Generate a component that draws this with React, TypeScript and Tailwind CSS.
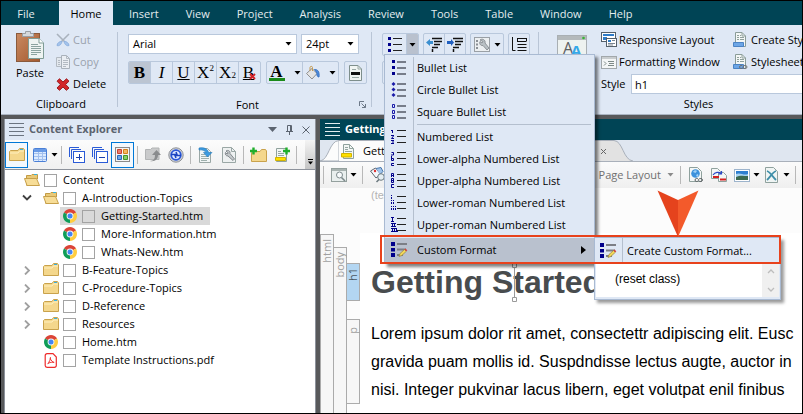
import type { ReactNode } from "react";

/* ---------- shared bits ---------- */

const Caret = ({ color = "#000" }: { color?: string }) => (
  <svg width="7" height="4" viewBox="0 0 7 4" className="shrink-0" aria-hidden="true">
    <path d="M0.500 0h6L3.500 3.500z" fill={color} />
  </svg>
);

const Svg = ({ w = 16, h = 16, children }: { w?: number; h?: number; children: ReactNode }) => (
  <svg width={w} height={h} viewBox={`0 0 ${w} ${h}`} fill="none" className="shrink-0" aria-hidden="true">
    {children}
  </svg>
);

/* ---------- ribbon icons ---------- */

const PasteIcon = () => (
  <Svg w={28} h={32}>
    <defs>
      <linearGradient id="board" x1="0" y1="0" x2="1" y2="1">
        <stop offset="0" stopColor="#c98a62" />
        <stop offset="1" stopColor="#a4592f" />
      </linearGradient>
    </defs>
    <rect x="0.5" y="2.5" width="23" height="28" fill="url(#board)" stroke="#8a5a3c" />
    <path d="M6.500 5.500V2.500H9.500V0.500H14.500V2.500H17.500V5.500Z" fill="#d5d9dd" stroke="#9aa0a6" />
    <path d="M12.500 7.500H23L27.500 12V27.500H12.500Z" fill="#eef4f2" stroke="#7f9c96" />
    <path d="M23 7.500V12H27.500" stroke="#7f9c96" fill="#fff" />
    <path d="M15 13.500h7M15 15.500h10M15 17.500h10M15 19.500h10M15 21.500h10M15 23.500h6" stroke="#8ba39f" />
  </Svg>
);

const CutIcon = () => (
  <Svg w={14} h={14}>
    <path d="M1 1l8 8M13 1L5 9" stroke="#a9b2bd" strokeWidth="1.6" />
    <path d="M1 12.500C1 10 4 8 6 8.500 5.500 11 3.500 13.500 1 12.500zM13 12.500C13 10 10 8 8 8.500 8.500 11 10.500 13.500 13 12.500z" fill="#a5c4ec" stroke="#8fb2e0" />
  </Svg>
);

const CopyIcon = () => (
  <Svg w={14} h={16}>
    <path d="M0.500 3.500h5v9h-5z" fill="#e3e8ee" stroke="#b3bac2" />
    <path d="M5.500 1.500h5l3 3v10h-8z" fill="#eaeef3" stroke="#a9b1ba" />
    <path d="M10.500 1.500v3h3M7 6.500h5M7 8.500h5M7 10.500h5M7 12.500h3M2 6.500h2M2 8.500h2M2 10.500h2" stroke="#b3bac2" />
  </Svg>
);

const DeleteIcon = () => (
  <Svg w={14} h={13}>
    <path d="M3.500 0.800L7 4l3.500-3.200L13 3.200 9.600 6.400 13 10l-2.600 2.300L7 9l-3.500 3.300L1 10l3.300-3.500L1 3.200z" fill="#d3252a" stroke="#9c1c20" />
  </Svg>
);

const BucketIcon = () => (
  <Svg w={16} h={16}>
    <path d="M1.500 8.500l5.500-5 5 5-5 5.500z" fill="#e4e4e4" stroke="#8f8f8f" />
    <path d="M5 6V2.500C5 1 7.500 1 7.500 2.500V6" stroke="#c39a52" />
    <path d="M9.500 4.500c3.500 0 5 2 4.500 7.500-1.500 0-2.500-1.500-2-4z" fill="#4f8fe0" stroke="#3a72bf" />
  </Svg>
);

const StylePageIcon = () => (
  <Svg w={13} h={16}>
    <path d="M0.500 0.500H9L12.500 4v11.500H0.500z" fill="#f1f5f3" stroke="#7e8f8c" />
    <path d="M9 0.500V4h3.500M3 4.500h4" stroke="#9aaaa6" />
    <path d="M2 7h9v3H2z" fill="#111" />
    <path d="M3 12.500h7" stroke="#9aaaa6" />
  </Svg>
);

type Mark = "square" | "diamond" | "open" | "decimal" | "lower" | "upper" | "iroman" | "uroman";

const marks: Record<Mark, ReactNode> = {
  square: <path d="M1 0h3v3H1zM1 6h3v3H1zM1 12h3v3H1z" fill="#00008b" />,
  diamond: <path d="M2.500 0L4.500 2 2.500 4 0.500 2zM2.500 5.500l2 2-2 2-2-2zM2.500 11l2 2-2 2-2-2z" fill="#1a1aa8" />,
  open: <path d="M1.500 0.500h2v3h-2zM1.500 6.500h2v3h-2zM1.500 11.500h2v3h-2z" stroke="#1a1aa8" />,
  decimal: <path d="M0 1.500h2M1.500 1v3M0 6.500h3M2.500 7L0.500 9.500H3M0 11.500h3M1 13h2M0 14.500h3" stroke="#00008b" />,
  lower: <path d="M0.500 1.500h2v2.500h-2.500M0.500 5v4.500h2v-2h-2M3 12.500H0.500v2H3" stroke="#00008b" />,
  upper: <path d="M0.500 4V0.500h2V4M0.500 2.500h2M0.500 5.500v4h2v-4h-2M0.500 7.500h2M3 11.500H0.500v3H3" stroke="#00008b" />,
  iroman: <path d="M0.500 0v1M0.500 2v2M0.500 5v1M2.500 5v1M0.500 7v2M2.500 7v2M0.500 11v1M2.500 11v1M4.500 11v1M0.500 13v2M2.500 13v2M4.500 13v2" stroke="#00008b" />,
  uroman: <path d="M0 0.500h3M1.500 0v4M0 4.500h3M0 6.500h5M1.500 6v3M3.500 6v3M0 9.500h5M0 11.500h6M1.500 11v4M3.500 11v4M5.500 11v4M0 14.500h7" stroke="#00008b" />,
};

const ListIcon = ({ mark, gray = false }: { mark: Mark; gray?: boolean }) => (
  <Svg w={16} h={16}>
    {marks[mark]}
    {gray ? (
      <path d="M6 1h9v2H6zM6 7h9v2H6zM6 13h9v2H6z" fill="#777d8a" />
    ) : (
      <path d="M6 1.500h9M6 7.500h9M6 13.500h9" stroke="#222" />
    )}
  </Svg>
);

const CustomListIcon = () => (
  <Svg w={17} h={16}>
    <path d="M0 0h4v4H0zM0 6h4v3.500H0zM0 11h4v4H0z" fill="#00008b" />
    <path d="M6 1h10v2H6zM6 6.500h9v2H6zM6 12h6v2H6z" fill="#7c7f86" />
    <path d="M8 14.500l1-3 4.500-4 1.800 1.800-4.500 4.200z" fill="#f3d85a" stroke="#97833a" strokeWidth="0.700" />
    <path d="M13.500 7.500l1-1 1.800 1.800-1 1z" fill="#d63b3b" />
  </Svg>
);

const IndentIcon = ({ out = false }: { out?: boolean }) => (
  <Svg w={16} h={15}>
    <path d="M6 1.500h10M8 4.500h8M8 7.500h6M6 10.500h6M6.500 12v3" stroke="#111" strokeWidth="1.500" />
    {out ? <path d="M0 5.500L4 2v2h3v3H4v2z" fill="#3b8fd0" /> : <path d="M7 5.500L4 2v2H0v3h4v2z" fill="#1f5fc0" />}
  </Svg>
);

const ListWrenchIcon = () => (
  <Svg w={16} h={15}>
    <rect x="0.500" y="0.500" width="15" height="14" fill="#eceff1" stroke="#9aa0a6" />
    <path d="M2 3h2v2H2zM2 6.500h2v2H2zM2 10h2v2H2z" fill="#8b9096" />
    <path d="M6 3c2-2 6 0 5 3l4 5-2 2-4-4.500C6.500 9 5 6.500 6 4.500l2 1.500 1-1.500z" fill="#b9c0c4" stroke="#7d8388" strokeWidth="0.800" />
  </Svg>
);

const LineSpacingIcon = () => (
  <Svg w={15} h={15}>
    <path d="M0.500 0v13.500h3M5.500 1.500h9M5.500 4.500h9M5.500 7.500h9M5.500 10.500h9M5.500 13.500h9M5.500 1v4M14.500 1v3" stroke="#111" />
  </Svg>
);

const StyleWindowIcon = () => (
  <svg width="30" height="30" viewBox="0 0 30 30" className="shrink-0" aria-hidden="true">
    <rect x="0.500" y="0.500" width="29" height="29" fill="#eef2f0" stroke="#a9afb3" />
    <path d="M1 1h28v4H1z" fill="#b4b9bb" />
    <circle cx="26.500" cy="3" r="1.300" fill="#36b336" />
    <text x="6" y="19" fontSize="16" fontFamily="Open Sans, sans-serif" fill="#5d6164">A</text>
    <text x="14" y="21" fontSize="15" fontWeight="700" fontFamily="Open Sans, sans-serif" fill="#35a8e8">A</text>
  </svg>
);

const ResponsiveIcon = () => (
  <Svg w={16} h={16}>
    <rect x="0.500" y="0.500" width="14" height="9" fill="#fff" stroke="#55606a" />
    <path d="M2 2h11v2H2zM2 5h4v3H2z" fill="#2f7cc8" />
    <rect x="5.500" y="6.500" width="10" height="8" fill="#fff" stroke="#55606a" />
    <path d="M7 8h3v2H7z" fill="#2f7cc8" />
    <path d="M11 8.500h3M7 11.500h7M7 13h5" stroke="#7a8590" />
  </Svg>
);

const FormattingIcon = () => (
  <Svg w={16} h={13}>
    <rect x="0.500" y="0.500" width="15" height="12" fill="#f4f6f6" stroke="#a2a8ab" />
    <path d="M1 1h14v2H1z" fill="#c9cdcf" />
    <path d="M7 5.500h6M8 7.500h5M7 9.500h6M3 5.500l2 2-2 2" stroke="#7e8a88" />
  </Svg>
);

const SheetIcon = ({ link = false }: { link?: boolean }) => (
  <Svg w={15} h={16}>
    <path d="M2.500 0.500H9L12.500 4v10.500H2.500z" fill="#f4f7f6" stroke="#8a9c98" />
    <path d="M9 0.500V4h3.500M4 3.500h2M7 3.500h1M4 5.500h2M7 5.500h4M4 7.500h2M7 7.500h4" stroke="#8fa09c" />
    <path d="M0.500 10.500h10v4H0.500z" fill="#6da6e6" stroke="#4b83c4" />
    {link && <path d="M6.500 13c0-2 3-2 3.500-0.500M10 12.500c1-1.500 4-1.500 4 0.500s-3 2-4 0.500M10 13.500c-1 1.500-3.500 1.300-3.500-0.500" stroke="#6e7073" />}
  </Svg>
);

/* ---------- explorer icons ---------- */

const FolderIcon = ({ open = false }: { open?: boolean }) => (
  <Svg w={16} h={14}>
    {open ? (
      <>
        <path d="M2.500 12.500V2.500H7L8 1.500H13.500V6" fill="#e9c977" stroke="#c29b45" />
        <path d="M10 1.500h3" stroke="#38b0e0" />
        <path d="M0.500 5.500H12.500L15.500 12.500H3z" fill="#f7dd97" stroke="#c7a04b" />
      </>
    ) : (
      <>
        <path d="M0.500 12.500V3.500L1.500 2.500H9L10.500 0.500H14.500L15.500 2V12.500z" fill="#f4d78c" stroke="#c9a24c" />
        <path d="M1 5h8l1.500-2H15" stroke="#fff0c0" />
        <path d="M11 1.500h3" stroke="#38b0e0" />
      </>
    )}
  </Svg>
);

const ChromeIcon = () => (
  <svg width="14" height="14" viewBox="0 0 14 14" className="mx-px shrink-0" aria-hidden="true">
    <path d="M7 7L0.940 3.500A7 7 0 0 1 13.060 3.500z" fill="#db4437" />
    <path d="M7 7L13.060 3.500A7 7 0 0 1 7 14z" fill="#ffcd40" />
    <path d="M7 7V14A7 7 0 0 1 0.940 3.500z" fill="#0f9d58" />
    <circle cx="7" cy="7" r="3.400" fill="#f4f4f4" />
    <circle cx="7" cy="7" r="2.500" fill="#4285f4" />
  </svg>
);

const PdfIcon = () => (
  <svg width="14" height="15" viewBox="0 0 14 15" fill="none" className="mx-px shrink-0" aria-hidden="true">
    <path d="M3 0.700h6l3.300 3.300v8.500a1.800 1.800 0 0 1-1.800 1.800H3a1.800 1.800 0 0 1-1.800-1.800v-10A1.800 1.800 0 0 1 3 0.700z" fill="#fff" stroke="#ee2b2b" strokeWidth="1.200" />
    <path d="M6.500 4.500c-1 0 0.500 4 3.500 5 1 0-4-1-6 1.200C3 11.500 6.500 8 6.500 4.500z" stroke="#ee2b2b" />
  </svg>
);

const GridIcon = () => (
  <Svg w={14} h={14}>
    <rect x="0.500" y="0.500" width="13" height="13" rx="1" fill="#dcebff" stroke="#4a7fd6" />
    <path d="M1 1h12v3H1z" fill="#6a9be6" />
    <path d="M1 5.500h12M1 8.500h12M1 11.500h12M5.500 4v9M9.500 4v9" stroke="#a3c0ee" />
  </Svg>
);

const StackIcon = ({ plus = false }: { plus?: boolean }) => (
  <Svg w={16} h={16}>
    <path d="M0.500 10V0.500H10M2.500 12V2.500H12" stroke="#2a5bd7" />
    <rect x="4.500" y="4.500" width="11" height="11" fill="#fff" stroke="#2a5bd7" />
    <path d={plus ? "M7 10.500h6M10.500 7v6" : "M7 10.500h6"} stroke="#1a3fae" />
  </Svg>
);

const QuadIcon = () => (
  <Svg w={15} h={15}>
    <rect x="0.500" y="0.500" width="14" height="14" fill="#f4f4f4" stroke="#8a8a8a" />
    <path d="M2.500 2.500h4v4h-4z" fill="#e87a6a" stroke="#c8402f" />
    <path d="M8.500 2.500h4v4h-4z" fill="#f4b860" stroke="#d3811c" />
    <path d="M2.500 8.500h4v4h-4z" fill="#6ea6ea" stroke="#2b66b8" />
    <path d="M8.500 8.500h4v4h-4z" fill="#86cc68" stroke="#449428" />
  </Svg>
);

const FolderUpIcon = () => (
  <Svg w={16} h={15}>
    <path d="M0.500 12.500v-10h5l1.500-1.500h7v11.500z" fill="#c9cacb" stroke="#b2b4b5" />
    <path d="M5 14c4 0 5-3 5-6H7l4.500-5L16 8h-3c0 4-3 7-8 6z" fill="#8a8c8e" />
  </Svg>
);

const SyncIcon = () => (
  <Svg w={16} h={16}>
    <circle cx="8" cy="8" r="7.200" fill="#d0d3d8" stroke="#8d9096" />
    <circle cx="8" cy="8" r="4.800" fill="#dfe9ff" stroke="#2a57d8" strokeWidth="1.800" />
    <path d="M3 7.500h6l-1-2.500M13 8.500H7l1 2.500" stroke="#1b44c0" strokeWidth="1.500" />
  </Svg>
);

const PageArrowIcon = () => (
  <Svg w={15} h={16}>
    <path d="M1.500 1.500h8l3 3v11h-11z" fill="#f2f6f6" stroke="#9aa7a5" />
    <path d="M3 7.500h4M3 9.500h8M3 11.500h8M3 13.500h6" stroke="#9fb0ad" />
    <path d="M1 1c5-1 9 1 9.500 4.500H14L9.500 10 5.500 5.500H8C7 3.500 4 2.500 1 3z" fill="#3c9be0" stroke="#2477b8" strokeWidth="0.600" />
  </Svg>
);

const PageWrenchIcon = () => (
  <Svg w={14} h={16}>
    <path d="M0.500 0.500h9l4 4v11h-13z" fill="#eef1f1" stroke="#9aa7a5" />
    <path d="M9.500 0.500v4h4" stroke="#9aa7a5" />
    <path d="M4 4c2-1.500 4.500 0 4 2.500l4.500 5.500-1.500 1.500L6 9C3.500 9 3 7 3.500 5.500L5 7l1.300-1z" fill="#c5cacc" stroke="#6d7478" strokeWidth="0.800" />
  </Svg>
);

const FolderPlusIcon = () => (
  <Svg w={17} h={16}>
    <path d="M1.500 14.500v-9l1-1H10L11.500 2.500h4l1 1.500v10.500z" fill="#f4d78c" stroke="#c9a24c" />
    <path d="M0 4h7M3.500 0.500v7" stroke="#1fae2b" strokeWidth="2.400" />
  </Svg>
);

const PagePlusIcon = () => (
  <Svg w={16} h={16}>
    <path d="M2.500 1.500h10v13h-10z" fill="#f2f6f4" stroke="#8fa19d" />
    <path d="M4 4.500h3M4 6.500h6M4 8.500h6" stroke="#95a6a2" />
    <path d="M1.500 10.500h10v3h-10z" fill="#ffe000" stroke="#d3b400" />
    <path d="M9 4h7M12.500 0.500v7" stroke="#1fae2b" strokeWidth="2.400" />
  </Svg>
);

const TopicIcon = () => (
  <Svg w={14} h={15}>
    <path d="M2.500 0.500h6l4 4v10h-10z" fill="#f3f7f5" stroke="#8fa19d" />
    <path d="M8.500 0.500v4h4M4 3.500h3M4 5.500h3M4 7.500h7" stroke="#95a6a2" />
    <path d="M0.500 9.500h10v3.500h-10z" fill="#ffe000" stroke="#d3b400" />
  </Svg>
);

const PreviewIcon = () => (
  <Svg w={16} h={14}>
    <rect x="0.500" y="0.500" width="15" height="13" fill="#e9efee" stroke="#94a09e" />
    <path d="M1 1h14v2H1z" fill="#a8b3b1" />
    <circle cx="8.500" cy="7" r="3" fill="#f8fbfc" stroke="#7d8a8c" />
    <path d="M10.500 9.500l3.500 3.500" stroke="#7d8a8c" strokeWidth="1.600" />
  </Svg>
);

const TagSearchIcon = () => (
  <Svg w={16} h={16}>
    <path d="M0.500 4l5-3 5 6-4.500 4z" fill="#f5f7fa" stroke="#5b6670" />
    <path d="M6 1.500l5-1 2 4-3 3" fill="#9fc3ea" stroke="#4a78ad" />
    <circle cx="5" cy="4" r="1.200" fill="#d33" />
    <circle cx="11" cy="10" r="3.300" fill="#e5eef3" stroke="#6d7a80" />
    <path d="M9 12.500L6.500 15" stroke="#6d7a80" strokeWidth="1.600" />
  </Svg>
);

const GlobePageIcon = () => (
  <Svg w={14} h={16}>
    <path d="M0.500 0.500h8l4 4v10H0.500z" fill="#f4f7f6" stroke="#8fa19d" />
    <circle cx="6.500" cy="6.500" r="4.300" fill="#3d92dc" />
    <path d="M4 5c1-2 3-2.500 4-1L6.500 6zM7 8l2-1 0.500 2-1.500 1z" fill="#9fd0f5" />
    <path d="M6 13c0-2 3-2 3.500-0.500M9.500 12.500c1-1.500 4-1.300 4 0.500s-3 2-4 0.500M9.500 13.500c-1 1.500-3.500 1.300-3.500-0.500" stroke="#5e6265" />
  </Svg>
);

const XrefIcon = () => (
  <Svg w={16} h={16}>
    <path d="M0.500 1.500h6l3 3v7h-9z" fill="#f4f7f6" stroke="#8fa19d" />
    <path d="M7.500 5.500h5l3 3v6h-8z" fill="#f4f7f6" stroke="#8fa19d" />
    <path d="M2 8c2-3 6-3.500 8-1.500M10.500 4v3h-3" stroke="#2a49c8" strokeWidth="1.200" />
    <path d="M2 10h6M9 12.500h6" stroke="#d42020" strokeWidth="2" />
  </Svg>
);

const ImageIcon = () => (
  <Svg w={16} h={13}>
    <rect x="0.500" y="0.500" width="15" height="12" fill="#fff" stroke="#9db4cc" />
    <path d="M2 2h12v5H2z" fill="#2e7fd0" />
    <path d="M2 5c4-2 8 2 12 0v3H2z" fill="#a9d4f2" />
    <path d="M2 8c4-2 8-1 12-1v4H2z" fill="#3c6a50" />
  </Svg>
);

const CrossPageIcon = () => (
  <Svg w={13} h={16}>
    <path d="M0.500 0.500h8l4 4v11H0.500z" fill="#f0f5f4" stroke="#8fa19d" />
    <path d="M2 4c3 1 6 6 9 9M11 4C8 5 5 10 2 13" stroke="#3e8ea8" strokeWidth="1.800" />
  </Svg>
);

const Hamburger = ({ color }: { color: string }) => (
  <Svg w={15} h={13}>
    <path d="M0 0.500h15M0 4.500h15M0 8.500h15M0 12.500h15" stroke={color} />
  </Svg>
);

/* ---------- ribbon ---------- */

const RibbonSep = () => <div className="mb-[7px] mt-[7px] w-px shrink-0 bg-[#b9c5d6]" />;
const cell = "flex shrink-0 items-center justify-center border-r border-[#b9c8dc] last:border-r-0";
const cellGroup = "flex h-[23px] shrink-0 overflow-hidden rounded-[2px] border border-[#b9c8dc]";

const listItems: { mark: Mark; label: string; gray?: boolean }[] = [
  { mark: "square", label: "Bullet List", gray: true },
  { mark: "diamond", label: "Circle Bullet List", gray: true },
  { mark: "open", label: "Square Bullet List", gray: true },
  { mark: "decimal", label: "Numbered List" },
  { mark: "lower", label: "Lower-alpha Numbered List" },
  { mark: "upper", label: "Upper-alpha Numbered List" },
  { mark: "iroman", label: "Lower-roman Numbered List" },
  { mark: "uroman", label: "Upper-roman Numbered List" },
];

function CustomFormatMenu() {
  return (
    <div className="absolute -top-px left-[209px] z-20 w-[187px] border border-[#a9bad2] bg-[#dfe8f5] pb-[2px] shadow-[3px_3px_3px_rgba(0,0,0,0.4)]">
      <button type="button" className="flex h-[26px] w-full items-center">
        <span className="flex w-7 shrink-0 items-center justify-center self-stretch border-r border-[#b4bfce]">
          <CustomListIcon />
        </span>
        <span className="whitespace-nowrap pl-1">Create Custom Format...</span>
      </button>
      <div className="mx-px flex h-[33px] bg-white">
        <button type="button" className="flex flex-1 items-center pb-1 pl-[19px] font-['Liberation_Sans',sans-serif] text-[12px]">
          (reset class)
        </button>
        <div className="flex w-[17px] flex-col items-center justify-between bg-[#f0f0f0] py-[5px]">
          <Svg w={8} h={5}><path d="M1 4l3-3 3 3" stroke="#bdbdbd" strokeWidth="1.300" /></Svg>
          <Svg w={8} h={5}><path d="M1 1l3 3 3-3" stroke="#bdbdbd" strokeWidth="1.300" /></Svg>
        </div>
      </div>
    </div>
  );
}

function ListMenu() {
  return (
    <div className="absolute left-[2px] top-[21px] z-10 w-[211px] border border-[#a9bad2] bg-[#dfe8f5] pb-px pt-[2px] shadow-[3px_3px_3px_rgba(0,0,0,0.5)]">
      {listItems.map((it, i) => (
        <div key={it.label}>
          {i === 3 && (
            <div className="flex h-[3px] items-center pl-[28px]">
              <div className="h-[3px] w-px bg-[#b4bfce]" />
              <div className="ml-[3px] mr-[3px] h-px flex-1 bg-[#b4bfce]" />
            </div>
          )}
          <button type="button" className="flex h-[22px] w-full items-center">
            <span className="flex w-[29px] shrink-0 items-center justify-center self-stretch border-r border-[#b4bfce]">
              <ListIcon mark={it.mark} gray={it.gray} />
            </span>
            <span className="whitespace-nowrap pl-[3px]">{it.label}</span>
          </button>
        </div>
      ))}
      <div className="relative mt-[2px]">
        <button type="button" className="flex h-[24px] w-full items-center bg-[#b9c1ce]">
          <span className="flex w-[29px] shrink-0 justify-center">
            <CustomListIcon />
          </span>
          <span className="pl-[3px]">Custom Format</span>
          <svg width="5" height="8" viewBox="0 0 5 8" className="ml-auto mr-2" aria-hidden="true">
            <path d="M0 0l5 4-5 4z" fill="#000" />
          </svg>
        </button>
        <CustomFormatMenu />
        <div className="pointer-events-none absolute -left-[5px] -top-[3px] z-30 h-[29px] w-[401px] border-2 border-[#e8421c]" />
        <svg width="42" height="47" viewBox="0 0 42 47" className="absolute -top-[48px] left-[272px] z-30" aria-hidden="true">
          <path d="M0.500 0.500L21 10v37z" fill="#e5431d" />
          <path d="M41.500 0.500L21 10v37z" fill="#f35a2b" />
        </svg>
      </div>
    </div>
  );
}

function Ribbon() {
  const B = "font-['Liberation_Serif',serif] text-[17px] leading-none";
  return (
    <header className="shrink-0">
      <nav className="flex h-6 bg-[#004455] pt-[2px] text-[#e3ecef]">
        <button type="button" className="mr-2 w-[50px]">File</button>
        <button type="button" className="-mt-[2px] w-[54px] bg-[#dfe8f5] pt-[2px] text-black">Home</button>
        <div className="flex gap-[27px] pl-4">
          {["Insert", "View", "Project", "Analysis", "Review", "Tools", "Table", "Window", "Help"].map((t) => (
            <button type="button" key={t}>{t}</button>
          ))}
        </div>
      </nav>

      <div className="flex h-[90px] border-b border-[#aab4c2] bg-[#dfe8f5]">
        {/* Clipboard */}
        <section className="flex w-[116px] shrink-0 flex-col">
          <div className="flex flex-1 pl-[14px] pt-[4px]">
            <button type="button" className="flex w-[30px] flex-col items-center pt-[2px]">
              <PasteIcon />
              <span className="leading-[20px]">Paste</span>
            </button>
            <div className="flex flex-col pl-[11px]">
              <button type="button" className="flex h-[22px] items-center gap-[3px] text-[#9aa2ad]"><CutIcon />Cut</button>
              <button type="button" className="flex h-[22px] items-center gap-[3px] text-[#9aa2ad]"><CopyIcon />Copy</button>
              <button type="button" className="flex h-[22px] items-center gap-[3px]"><DeleteIcon />Delete</button>
            </div>
          </div>
          <div className="h-[19px] pl-1 text-center leading-[18px]">Clipboard</div>
        </section>
        <RibbonSep />

        {/* Font */}
        <section className="flex w-[253px] shrink-0 flex-col pl-[10px]">
          <div className="flex-1 pt-[9px]">
            <div className="flex gap-1">
              <button type="button" aria-label="Font family" className="flex h-5 w-[169px] items-center justify-between border border-[#b9c8dc] bg-white px-1">
                Arial<Caret />
              </button>
              <button type="button" aria-label="Font size" className="flex h-5 w-[58px] items-center justify-between border border-[#b9c8dc] bg-white px-1">
                24pt<Caret />
              </button>
            </div>
            <div className="mt-[7px] flex gap-[5px]">
              <div className={cellGroup}>
                <button type="button" className={`${cell} ${B} w-[22px] bg-[#bcc5d2] font-bold`}>B</button>
                <button type="button" className={`${cell} ${B} w-[22px] italic`}>I</button>
                <button type="button" className={`${cell} ${B} w-[22px] underline`}>U</button>
                <button type="button" className={`${cell} ${B} w-[22px]`}>X<sup className="text-[9px]">2</sup></button>
                <button type="button" className={`${cell} ${B} w-[22px]`}>X<sub className="text-[9px]">2</sub></button>
                <button type="button" aria-label="Clear formatting" className={`${cell} ${B} w-[21px] underline`}>
                  B
                  <svg width="7" height="7" viewBox="0 0 7 7" className="-ml-[5px] mb-[3px] self-end" aria-hidden="true">
                    <path d="M1 1l5 5M6 1L1 6" stroke="#d3252a" strokeWidth="2" />
                  </svg>
                </button>
              </div>
              <div className={cellGroup}>
                <button type="button" aria-label="Font colour" className={`${cell} w-[36px] gap-[9px]`}>
                  <span className="w-4 border-b-[3px] border-[#1a8a1a] text-center font-['Liberation_Serif',serif] text-[17px] font-bold leading-[13px]">A</span>
                  <Caret />
                </button>
                <button type="button" aria-label="Highlight" className={`${cell} w-[35px] gap-[8px]`}><BucketIcon /><Caret /></button>
              </div>
              <div className={cellGroup}>
                <button type="button" aria-label="Font properties" className={`${cell} w-[21px]`}><StylePageIcon /></button>
              </div>
            </div>
          </div>
          <div className="flex h-[19px] items-center">
            <span className="flex-1 pl-2 text-center leading-[18px]">Font</span>
            <button type="button" aria-label="Font dialog" className="mr-[5px]">
              <Svg w={7} h={7}><path d="M0.500 5V0.500H5M2.500 2.500l4 4M6.500 3v3.500H3" stroke="#6d7988" /></Svg>
            </button>
          </div>
        </section>
        <RibbonSep />

        {/* Paragraph */}
        <section className="w-[166px] shrink-0 pl-[10px] pt-[8px]">
          <div className="flex gap-[4px]">
            <div className="relative">
              <div className={cellGroup}>
                <button type="button" aria-label="Bullet list" className={`${cell} w-[24px]`}><ListIcon mark="square" /></button>
                <button type="button" aria-label="List types" className={`${cell} w-[11px] bg-[#b9c1ce]`}><Caret /></button>
              </div>
              <ListMenu />
            </div>
            <div className={cellGroup}>
              <button type="button" aria-label="Outdent" className={`${cell} w-[21px]`}><IndentIcon out /></button>
              <button type="button" aria-label="Indent" className={`${cell} w-[20px]`}><IndentIcon /></button>
            </div>
            <div className={cellGroup}>
              <button type="button" aria-label="List settings" className={`${cell} w-[32px] gap-[4px]`}><ListWrenchIcon /><Caret /></button>
            </div>
            <div className={cellGroup}>
              <button type="button" aria-label="Line spacing" className={`${cell} w-[20px]`}><LineSpacingIcon /></button>
            </div>
          </div>
          <div className="mt-[5px] h-[23px] w-[120px] rounded-[2px] border border-[#b9c8dc]" />
        </section>
        <RibbonSep />

        {/* Styles */}
        <section className="flex min-w-0 flex-1 flex-col">
          <div className="flex flex-1 pt-[4px]">
            <button type="button" aria-label="Styles window" className="ml-[18px] mr-[14px] mt-[6px] self-start"><StyleWindowIcon /></button>
            <div className="min-w-0 flex-1">
              <div className="flex h-[22px] whitespace-nowrap">
                <button type="button" className="flex w-[132px] shrink-0 items-center gap-[2px]"><ResponsiveIcon />Responsive Layout</button>
                <button type="button" className="flex items-center gap-[3px]"><SheetIcon />Create Style</button>
              </div>
              <div className="flex h-[22px] whitespace-nowrap">
                <button type="button" className="flex w-[132px] shrink-0 items-center gap-[2px]"><FormattingIcon />Formatting Window</button>
                <button type="button" className="flex items-center gap-[3px]"><SheetIcon link />Stylesheet</button>
              </div>
              <label className="flex h-[22px] items-center gap-1">
                <span className="w-[26px]">Style</span>
                <input defaultValue="h1" className="h-5 min-w-0 flex-1 border border-r-0 border-[#b9c8dc] bg-white pl-[3px] outline-none" />
              </label>
            </div>
          </div>
          <div className="h-[19px] pl-[56px] text-center leading-[18px]">Styles</div>
        </section>
      </div>
    </header>
  );
}

/* ---------- content explorer ---------- */

const ToolSep = () => <span className="mx-[3px] h-[18px] w-px shrink-0 bg-[#b8b8b8]" />;

const Tool = ({ label, active, children }: { label: string; active?: boolean; children: ReactNode }) => (
  <button
    type="button"
    aria-label={label}
    className={`flex h-[26px] w-[23px] shrink-0 items-center justify-center border ${active ? "border-[#0078d7] bg-[#f3f8fd]" : "border-transparent"}`}
  >
    {children}
  </button>
);

type Node = { level: 0 | 1 | 2; kind: "open" | "folder" | "htm" | "pdf"; name: string; twisty?: "open" | "closed"; selected?: boolean };

const tree: Node[] = [
  { level: 0, kind: "open", name: "Content" },
  { level: 1, kind: "open", name: "A-Introduction-Topics", twisty: "open" },
  { level: 2, kind: "htm", name: "Getting-Started.htm", selected: true },
  { level: 2, kind: "htm", name: "More-Information.htm" },
  { level: 2, kind: "htm", name: "Whats-New.htm" },
  { level: 1, kind: "folder", name: "B-Feature-Topics", twisty: "closed" },
  { level: 1, kind: "folder", name: "C-Procedure-Topics", twisty: "closed" },
  { level: 1, kind: "folder", name: "D-Reference", twisty: "closed" },
  { level: 1, kind: "folder", name: "Resources", twisty: "closed" },
  { level: 1, kind: "htm", name: "Home.htm" },
  { level: 1, kind: "pdf", name: "Template Instructions.pdf" },
];

const gutter = { 0: "w-px", 1: "w-5", 2: "w-[39px]" };

function TreeRow({ n }: { n: Node }) {
  return (
    <li className="flex h-[18px] items-center pl-4">
      <span className={`shrink-0 ${gutter[n.level]}`}>
        {n.twisty === "open" && <Svg w={12} h={8}><path d="M2 1.500l4 4 4-4" stroke="#404040" strokeWidth="1.800" /></Svg>}
        {n.twisty === "closed" && <Svg w={12} h={9}><path d="M4 0.500l4 4-4 4" stroke="#a0a0a0" strokeWidth="1.800" /></Svg>}
      </span>
      <label className={`flex h-[18px] items-center whitespace-nowrap px-[2px] ${n.selected ? "bg-[#d9d9d9] pr-[7px]" : ""}`}>
        {n.kind === "htm" ? <ChromeIcon /> : n.kind === "pdf" ? <PdfIcon /> : <FolderIcon open={n.kind === "open"} />}
        <input type="checkbox" className={`ml-1 mr-[6px] h-[13px] w-[13px] shrink-0 appearance-none border border-[#a3a3a3] ${n.selected ? "" : "bg-white"}`} />
        {n.name}
      </label>
    </li>
  );
}

function Explorer() {
  return (
    <aside className="mr-[4px] flex w-[312px] shrink-0 flex-col border-x border-[#8d929b] bg-white">
      <div className="flex h-[21px] shrink-0 items-center bg-[#dfe8f5] pl-1 font-bold text-[#5c6470]">
        <Hamburger color="#6b7480" />
        <h2 className="flex-1 pl-[5px]">Content Explorer</h2>
        <div className="flex items-center gap-[9px] pr-[5px]">
          <Svg w={9} h={5}><path d="M0 0h9L4.500 5z" fill="#5c6470" /></Svg>
          <Svg w={7} h={10}><path d="M1.500 6V0.500h4V6M0 6.500h7M3.500 7v3M4.500 1v5" stroke="#5c6470" /></Svg>
          <Svg w={8} h={8}><path d="M0.500 0.500l7 7M7.500 0.500l-7 7" stroke="#5c6470" /></Svg>
        </div>
      </div>
      <div className="flex h-[30px] shrink-0 items-center border-b border-[#8d929b] bg-gradient-to-b from-[#fcfcfc] to-[#f0f0f0]">
        <Tool label="Folders" active><FolderIcon /></Tool>
        <Tool label="List view"><GridIcon /></Tool>
        <button type="button" aria-label="View options"><Caret /></button>
        <ToolSep />
        <Tool label="Expand all"><StackIcon plus /></Tool>
        <Tool label="Collapse all"><StackIcon /></Tool>
        <Tool label="Show files" active><QuadIcon /></Tool>
        <ToolSep />
        <Tool label="Up one level"><FolderUpIcon /></Tool>
        <Tool label="Synchronize"><SyncIcon /></Tool>
        <ToolSep />
        <Tool label="Open"><PageArrowIcon /></Tool>
        <Tool label="Properties"><PageWrenchIcon /></Tool>
        <ToolSep />
        <Tool label="New folder"><FolderPlusIcon /></Tool>
        <Tool label="New topic"><PagePlusIcon /></Tool>
        <ToolSep />
        <button type="button" aria-label="More tools" className="ml-auto flex h-full w-[10px] flex-col items-center justify-end gap-px bg-gradient-to-b from-[#f4f4f4] to-[#c4c4c4] pb-1">
          <span className="h-px w-[5px] bg-black" />
          <Svg w={5} h={4}><path d="M0 0.500h5L2.500 3.500z" fill="#000" /></Svg>
        </button>
      </div>
      <ul className="pt-px">
        {tree.map((n) => <TreeRow key={n.name} n={n} />)}
      </ul>
    </aside>
  );
}

/* ---------- editor ---------- */

const bar = "border border-[#ababab] text-[11px] leading-[12px] text-[#a0a0a0]";
const barText = "[writing-mode:vertical-rl] rotate-180";

function Editor() {
  return (
    <main className="flex min-w-0 flex-1 flex-col bg-[#fcfcfc]">
      <div className="flex h-[21px] shrink-0 items-center bg-[#004455] pl-[5px] font-bold text-white">
        <Hamburger color="#e4edf0" />
        <span className="pl-[5px]">Getting-Started.htm</span>
      </div>
      <div className="flex h-[22px] shrink-0 items-end border-b border-[#a9b0ba] bg-[#dfe6f0]">
        <Svg w={19} h={21}>
          <path d="M0 21C9 20 9 1 19 0.500V21z" fill="#fcfcfc" stroke="#a9b0ba" />
        </Svg>
        <div className="flex h-[21px] w-[120px] items-center gap-[8px] border-t border-[#a9b0ba] bg-[#fcfcfc] pl-[2px]">
          <TopicIcon /><span className="whitespace-nowrap">Getting-Started</span>
        </div>
        <div className="flex h-[21px] w-[155px] items-center justify-end border-t border-[#a9b0ba] bg-[#e2e2e2] pr-[7px]">
          <button type="button" aria-label="Close tab">
            <Svg w={7} h={7}><path d="M1 1l5 5M6 1L1 6" stroke="#666" /></Svg>
          </button>
        </div>
        <Svg w={19} h={21}>
          <path d="M0 0.500C9 1 9 20 19 21H0z" fill="#e2e2e2" />
          <path d="M0 0.500C9 1 9 20 19 21" stroke="#a9b0ba" />
        </Svg>
      </div>
      <div className="flex h-[26px] shrink-0 items-center bg-gradient-to-b from-[#fbfbfb] to-[#efefef] text-[#707070]">
        <ToolSep />
        <Tool label="Preview"><PreviewIcon /></Tool>
        <Caret />
        <span className="w-[2px]" />
        <ToolSep />
        <Tool label="Find tags"><TagSearchIcon /></Tool>
        <div className="ml-auto flex items-center pr-[3px]">
          <button type="button" className="mr-[3px] flex items-center gap-[6px] whitespace-nowrap">Page Layout<Caret color="#8a8a8a" /></button>
          <ToolSep />
          <Tool label="Insert hyperlink"><GlobePageIcon /></Tool>
          <Tool label="Insert cross-reference"><XrefIcon /></Tool>
          <Tool label="Insert image"><ImageIcon /></Tool>
          <Caret />
          <Tool label="Insert snippet"><CrossPageIcon /></Tool>
          <Caret />
          <span className="w-[2px]" />
          <ToolSep />
        </div>
      </div>
      <div className="flex min-h-0 flex-1">
        <div className={`mt-[46px] w-[14px] shrink-0 border-b-0 bg-[#f7f7f7] pt-1 ${bar}`}><span className={barText}>html</span></div>
        <div className={`mt-[59px] w-[13px] shrink-0 border-b-0 border-l-0 bg-[#f7f7f7] pt-1 ${bar}`}><span className={barText}>body</span></div>
        <div className="flex w-[13px] shrink-0 flex-col pt-[75px]">
          <div className={`h-[38px] border-l-0 bg-[#b3d6f2] pt-1 ${bar}`}><span className={`${barText} text-[#4a5560]`}>h1</span></div>
          <div className={`mt-[18px] h-[85px] border-l-0 bg-[#f7f7f7] pt-1 ${bar}`}><span className={barText}>p</span></div>
        </div>
        <article className="min-w-0 flex-1 overflow-hidden whitespace-nowrap pl-[11px] font-['Liberation_Sans',Arial,sans-serif] text-black">
          <div className="h-[45px] text-[11px] leading-[14px] text-[#b4b4b4]">(text)</div>
          <div className="-ml-[11px] h-full bg-white pl-[11px]">
            <h1 className="relative pt-[31px] text-[32px] font-bold leading-[36px] text-[#484c4e]">
              Getting Started
              <svg width="5" height="39" viewBox="0 0 5 39" fill="none" className="absolute left-[141px] top-[30px]" aria-hidden="true">
                <path d="M2.500 4v31" stroke="#9a9a9a" />
                <path d="M0.500 0.500h4v4h-4zM0.500 34.500h4v4h-4z" stroke="#9a9a9a" fill="#fff" />
              </svg>
            </h1>
            <p className="pt-[20px] text-[16px] leading-[28px]">
              Lorem ipsum dolor rit amet, consectettr adipiscing elit. Eusc
              <br />
              gravida puam mollis id. Suspdndisse lectus augte, auctor in
              <br />
              nisi. Integer pukvinar lacus libern, eget volutpat enil finibus
            </p>
          </div>
        </article>
      </div>
    </main>
  );
}

export default function App() {
  return (
    <div className="flex h-screen flex-col overflow-hidden border border-black bg-[#58595b] font-['Open_Sans','Noto_Sans',sans-serif] text-[11px] text-black">
      <Ribbon />
      <div className="flex min-h-0 flex-1 pl-[3px] pt-1">
        <Explorer />
        <Editor />
      </div>
    </div>
  );
}
